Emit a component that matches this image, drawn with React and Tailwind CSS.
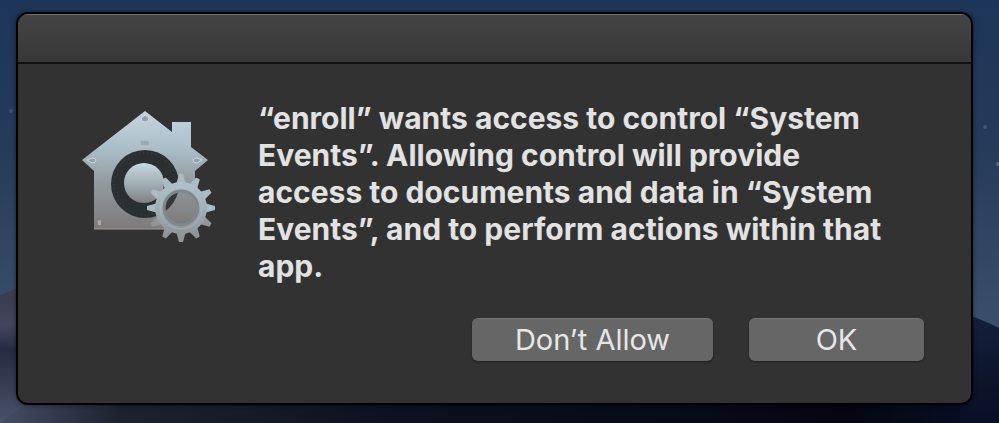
function Wallpaper() {
  return (
    <svg
      viewBox="0 0 999 423"
      preserveAspectRatio="none"
      className="absolute inset-0 -z-10 h-full w-full"
      aria-hidden="true"
    >
      <defs>
        <linearGradient id="sky" x1="0" y1="0" x2="0" y2="1">
          <stop offset="0" stopColor="#1d3558" />
          <stop offset="0.35" stopColor="#243b5a" />
          <stop offset="0.75" stopColor="#3a4e6a" />
        </linearGradient>
        <linearGradient id="dune" x1="0" y1="0" x2="0" y2="1">
          <stop offset="0" stopColor="#38394e" />
          <stop offset="0.3" stopColor="#41475c" />
          <stop offset="0.48" stopColor="#252c42" />
          <stop offset="1" stopColor="#4a5268" />
        </linearGradient>
        <linearGradient id="ground" x1="0" y1="0" x2="1" y2="0">
          <stop offset="0" stopColor="#454d63" />
          <stop offset="0.12" stopColor="#1d2230" />
          <stop offset="0.4" stopColor="#0c1020" />
          <stop offset="0.85" stopColor="#040712" />
          <stop offset="1" stopColor="#080f26" />
        </linearGradient>
        <linearGradient id="ridge" x1="0" y1="0" x2="0" y2="1">
          <stop offset="0" stopColor="#15203c" />
          <stop offset="1" stopColor="#080e24" />
        </linearGradient>
      </defs>
      <rect width="999" height="423" fill="url(#sky)" />
      <path d="M0 295 L30 283 V423 H0 Z" fill="url(#dune)" />
      <path d="M30 340 H999 V423 H0 L30 400 Z" fill="url(#ground)" />
      <path d="M960 313 Q980 318 999 328 V423 H960 Z" fill="url(#ridge)" />
      <g fill="#566580">
        <circle cx="11" cy="111" r="2" opacity="0.5" />
        <circle cx="985" cy="127" r="2" opacity="0.6" />
        <circle cx="998" cy="164" r="2" />
      </g>
    </svg>
  );
}

function AppIcon() {
  const teeth = Array.from({ length: 12 }, (_, i) => i * 30);
  return (
    <svg viewBox="0 0 160 150" className="h-[150px] w-[160px] shrink-0" role="img" aria-label="System Events">
      <defs>
        <linearGradient id="house" x1="0" y1="0" x2="0" y2="1">
          <stop offset="0" stopColor="#c3d6de" />
          <stop offset="0.3" stopColor="#adc0c9" />
          <stop offset="0.6" stopColor="#929ba0" />
          <stop offset="1" stopColor="#7d7a79" />
        </linearGradient>
        <linearGradient id="knob" x1="0" y1="0" x2="0" y2="1">
          <stop offset="0" stopColor="#c5d8e0" />
          <stop offset="0.5" stopColor="#a3b0b6" />
          <stop offset="1" stopColor="#828080" />
        </linearGradient>
        <linearGradient id="gear" gradientUnits="userSpaceOnUse" x1="0" y1="-34" x2="0" y2="34">
          <stop offset="0" stopColor="#b4c8d1" />
          <stop offset="0.5" stopColor="#9fafb6" />
          <stop offset="1" stopColor="#8b8f92" />
        </linearGradient>
        <linearGradient id="window" x1="0" y1="0" x2="0" y2="1">
          <stop offset="0" stopColor="#8e9598" />
          <stop offset="1" stopColor="#7c7a79" />
        </linearGradient>
        <clipPath id="hub">
          <circle cx="111" cy="108" r="17" />
        </clipPath>
      </defs>
      <path d="M75 11 L102 32 V22 H121 V47 L138 60 L125 71 V129 H24 V71 L12 60 Z" fill="url(#house)" />
      <path d="M24 129 H95" stroke="#a19e9c" strokeWidth="1" />
      <circle cx="75" cy="84" r="34" fill="#2a2f32" />
      <circle cx="75" cy="84" r="31" fill="none" stroke="#363d40" strokeWidth="2" strokeDasharray="1 3" />
      <circle cx="74" cy="83" r="20" fill="url(#knob)" />
      <g fill="#93a2a9" stroke="#ccdbe1" strokeWidth="1">
        <path d="M71 18 L75 15 L79 18 Q79 22 75 22 Q71 22 71 18 Z" />
        <path d="M17 60 L22 58 Q26 58 26 60 Q26 63 22 63 Z" />
        <path d="M132 60 L127 58 Q123 58 123 60 Q123 63 127 63 Z" />
      </g>
      <path d="M28 125 V121 Q30 119 31 121 V125 Z" fill="#a9a9a9" />
      <rect x="71" y="41" width="8" height="4" rx="1" fill="#98a9b1" />
      <g clipPath="url(#hub)">
        <rect x="94" y="91" width="34" height="34" fill="url(#window)" />
        <circle cx="75" cy="84" r="34" fill="#33393b" />
      </g>
      <g transform="translate(111 108)">
        <g fill="url(#gear)">
          {teeth.map((angle) => (
            <path
              key={angle}
              d="M-5 -23 L-2 -34 H2 L5 -23 Z"
              fill={angle > 100 && angle < 260 ? "#909598" : "#aabbc3"}
              transform={`rotate(${angle})`}
            />
          ))}
          <path fillRule="evenodd" d="M0 -26 A26 26 0 1 1 0 26 A26 26 0 1 1 0 -26 M0 -16 A16 16 0 1 0 0 16 A16 16 0 1 0 0 -16" />
        </g>
        <circle r="17" fill="none" stroke="#7c888e" strokeWidth="3" />
        <circle r="21" fill="none" stroke="#b4c1c7" strokeWidth="1" opacity="0.5" />
      </g>
    </svg>
  );
}

function DialogButton({ children, className }) {
  return (
    <button
      type="button"
      className={`h-[43px] rounded-md border-t border-[#747474] bg-[#666666] text-[29px] leading-[42px] text-[#e6e6e6] shadow-[0_1px_2px_rgba(0,0,0,0.4)] ${className}`}
    >
      {children}
    </button>
  );
}

export default function App() {
  return (
    <main className="relative isolate min-h-screen px-4 pt-3 pb-4 font-['Inter',sans-serif]">
      <Wallpaper />
      <section
        role="alertdialog"
        aria-describedby="message"
        className="mr-[10px] overflow-hidden rounded-xl border-2 border-black bg-[#323232] shadow-[0_0_4px_rgba(0,0,0,0.5)]"
      >
        <header className="h-[50px] border-t border-b-2 border-t-[#727272] border-b-[#111111] bg-linear-to-b from-[#444444] to-[#383838]" />
        <div className="flex pt-9 pl-[52px]">
          <AppIcon />
          <p id="message" className="ml-7 w-[636px] text-[30px] leading-[37px] font-bold text-[#e2e2e2]">
            “enroll” wants access to control “System Events”. Allowing control will provide access to documents and data in “System Events”, and to perform actions within that app.
          </p>
        </div>
        <div className="flex justify-end gap-9 pt-[33px] pr-[47px] pb-[42px]">
          <DialogButton className="w-[241px]">Don’t Allow</DialogButton>
          <DialogButton className="w-[175px]">OK</DialogButton>
        </div>
      </section>
    </main>
  );
}
